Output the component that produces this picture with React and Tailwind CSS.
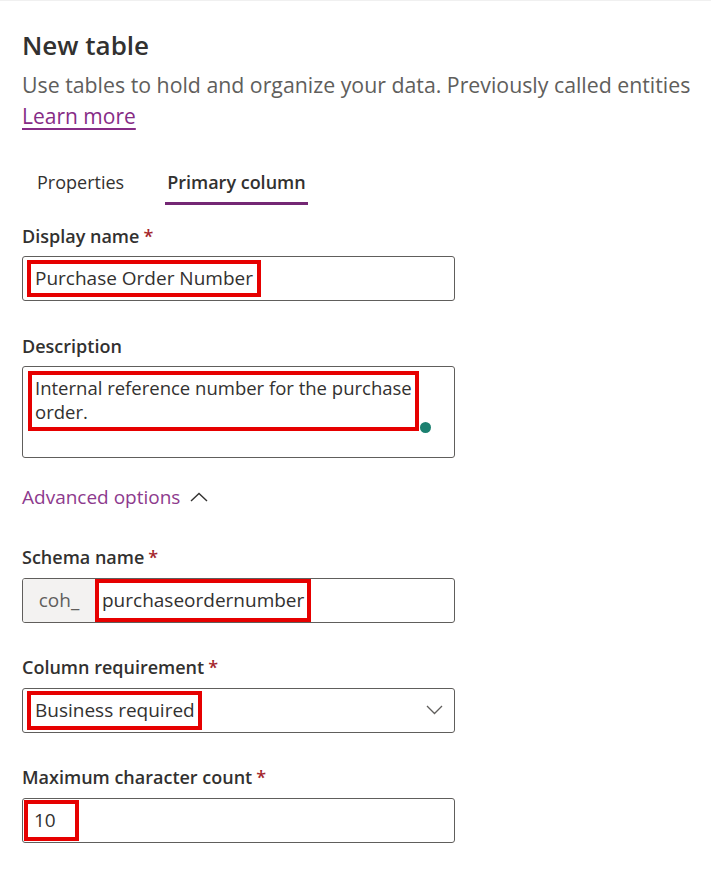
import React from 'react';

const Label = ({ children, required }) => (
    <div className="text-[18px] font-semibold text-[#323130] leading-[24px]">
        {children}
        {required && <span className="text-[#a4262c] ml-1">*</span>}
    </div>
);

const Marked = ({ children, className = '' }) => (
    <span className={`border-4 border-[#e60000] ${className}`}>{children}</span>
);

const App = () => {
    return (
        <div className="w-[711px] min-h-[881px] bg-white border-t border-[#f0f0f0] text-[#323130]" style={{ fontFamily: '"Open Sans", "Noto Sans", sans-serif' }}>
            <div className="ml-[22px] pt-[27px]">
                <h1 className="text-[26px] font-semibold leading-[34px] whitespace-nowrap">New table</h1>
            </div>
            <div className="px-[22px] pt-[9px]">
                <p className="text-[21.3px] text-[#605e5c] leading-[28px] whitespace-nowrap">
                    Use tables to hold and organize your data. Previously called entities
                </p>
                <a className="text-[21px] text-[#862c86] underline underline-offset-4 leading-[34px]">Learn more</a>
            </div>

            {/* Tabs */}
            <div className="flex gap-[27px] ml-[23px] mt-[36px] text-[18px]">
                <div className="px-[14px] pb-[8px] text-[#323130]">Properties</div>
                <div className="px-[2px] pb-[6px] font-semibold border-b-[3px] border-[#742774]">Primary column</div>
            </div>

            <div className="w-[433px] ml-[22px] flex flex-col">
                {/* Display name */}
                <div className="mt-[19px]">
                    <Label required>Display name</Label>
                    <div className="mt-[8px] h-[45px] border border-[#605e5c] rounded-[3px] flex items-center pl-[4px]">
                        <Marked className="pl-[4px] pr-[4px] h-[37px] flex items-center text-[19px]">Purchase Order Number</Marked>
                    </div>
                </div>

                {/* Description */}
                <div className="mt-[33px]">
                    <Label>Description</Label>
                    <div className="mt-[8px] h-[92px] border border-[#605e5c] rounded-[3px] pl-[5px] pt-[4px] flex items-start">
                        <Marked className="block w-[391px] pl-[3px] pt-[1px] pb-[3px] text-[18.5px] leading-[24px] whitespace-nowrap">
                            Internal reference number for the purchase<br />order.
                        </Marked>
                        <span className="mt-[51px] ml-[1px] w-[11px] h-[11px] rounded-full bg-[#1b8070]"></span>
                    </div>
                </div>

                {/* Advanced */}
                <div className="mt-[25px] flex items-center gap-[10px] text-[19px] text-[#8d3a8d]">
                    Advanced options
                    <svg width="18" height="10" viewBox="0 0 18 10" fill="none" stroke="#323130" strokeWidth="1.4">
                        <path d="M1 9L9 1.5L17 9" />
                    </svg>
                </div>

                {/* Schema name */}
                <div className="mt-[33px]">
                    <Label required>Schema name</Label>
                    <div className="mt-[9px] h-[45px] border border-[#605e5c] rounded-[3px] flex items-stretch overflow-hidden">
                        <div className="w-[72px] bg-[#f3f2f1] text-[#605e5c] text-[19px] flex items-center justify-center">coh_</div>
                        <Marked className="pl-[3px] pr-[3px] flex items-center text-[19px]">purchaseordernumber</Marked>
                    </div>
                </div>

                {/* Column requirement */}
                <div className="mt-[32px]">
                    <Label required>Column requirement</Label>
                    <div className="mt-[9px] h-[45px] border border-[#605e5c] rounded-[3px] flex items-center pl-[4px] pr-[11px]">
                        <Marked className="pl-[4px] pr-[3px] h-[39px] flex items-center text-[19px]">Business required</Marked>
                        <svg className="ml-auto" width="17" height="10" viewBox="0 0 17 10" fill="none" stroke="#605e5c" strokeWidth="1.3">
                            <path d="M1 1L8.5 8.5L16 1" />
                        </svg>
                    </div>
                </div>

                {/* Max character count */}
                <div className="mt-[32px]">
                    <Label required>Maximum character count</Label>
                    <div className="mt-[9px] h-[45px] border border-[#605e5c] rounded-[3px] flex items-center pl-[1px]">
                        <Marked className="w-[55px] pl-[6px] h-[41px] flex items-center text-[19px]">10</Marked>
                    </div>
                </div>
            </div>
        </div>
    );
};

export default App;
